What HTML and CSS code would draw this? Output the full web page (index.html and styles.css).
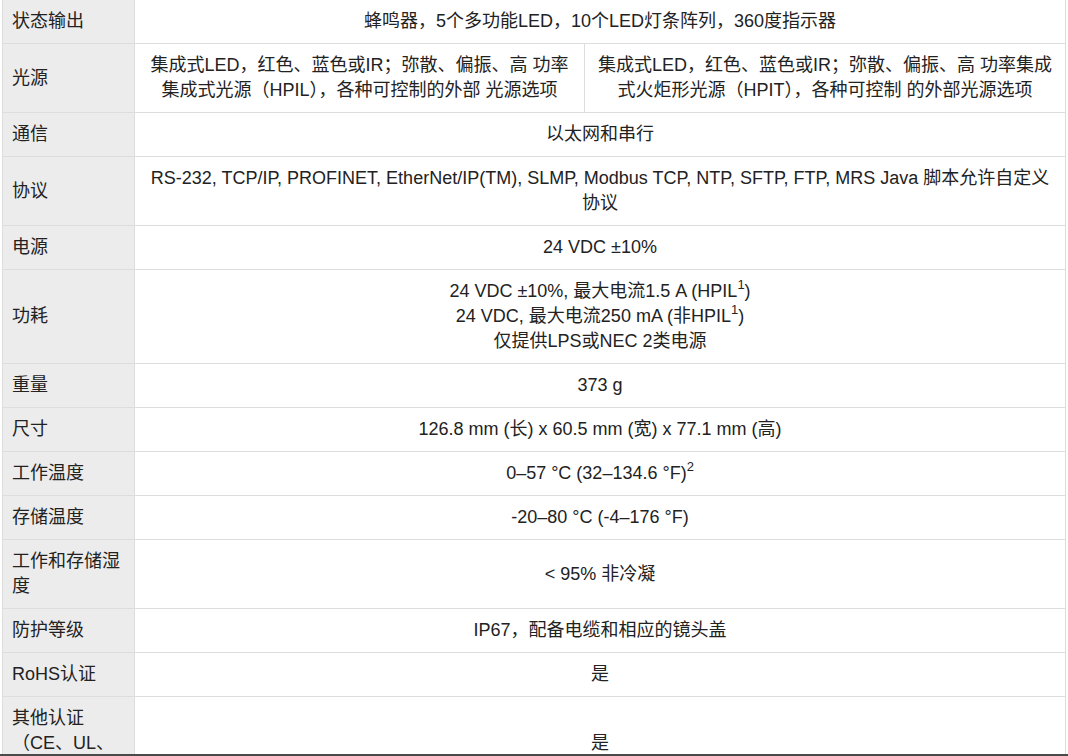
FILE: index.html
```html
<!DOCTYPE html>
<html lang="zh-CN">
<head>
<meta charset="utf-8">
<title>规格</title>
<link rel="stylesheet" href="styles.css">
</head>
<body>
<table class="spec">
  <colgroup>
    <col class="c-label">
    <col class="c-a">
    <col class="c-b">
  </colgroup>
  <tbody>
    <tr><th>状态输出</th><td colspan="2">蜂鸣器，5个多功能LED，10个LED灯条阵列，360度指示器</td></tr>
    <tr><th>光源</th><td>集成式LED，红色、蓝色或IR；弥散、偏振、高 功率<br>集成式光源（HPIL），各种可控制的外部 光源选项</td><td>集成式LED，红色、蓝色或IR；弥散、偏振、高 功率集成<br>式火炬形光源（HPIT），各种可控制 的外部光源选项</td></tr>
    <tr><th>通信</th><td colspan="2">以太网和串行</td></tr>
    <tr><th>协议</th><td colspan="2">RS-232, TCP/IP, PROFINET, EtherNet/IP(TM), SLMP, Modbus TCP, NTP, SFTP, FTP, MRS Java 脚本允许自定义<br>协议</td></tr>
    <tr><th>电源</th><td colspan="2">24 VDC ±10%</td></tr>
    <tr><th>功耗</th><td colspan="2">24 VDC ±10%, 最大电流1.5 A (HPIL<sup>1</sup>)<br>24 VDC, 最大电流250 mA (非HPIL<sup>1</sup>)<br>仅提供LPS或NEC 2类电源</td></tr>
    <tr><th>重量</th><td colspan="2">373 g</td></tr>
    <tr><th>尺寸</th><td colspan="2">126.8 mm (长) x 60.5 mm (宽) x 77.1 mm (高)</td></tr>
    <tr><th>工作温度</th><td colspan="2">0–57 °C (32–134.6 °F)<sup>2</sup></td></tr>
    <tr><th>存储温度</th><td colspan="2">-20–80 °C (-4–176 °F)</td></tr>
    <tr><th>工作和存储湿度</th><td colspan="2">&lt; 95% 非冷凝</td></tr>
    <tr><th>防护等级</th><td colspan="2">IP67，配备电缆和相应的镜头盖</td></tr>
    <tr><th>RoHS认证</th><td colspan="2">是</td></tr>
    <tr><th>其他认证（CE、UL、FCC、KC）</th><td colspan="2">是</td></tr>
  </tbody>
</table>
<div class="edge"></div>
</body>
</html>
```
FILE: styles.css
```css
html, body {
  margin: 0;
  padding: 0;
  background: #ffffff;
}
body {
  font-family: "Liberation Sans", Arial, "Noto Sans CJK SC", sans-serif;
  font-size: 18px;
  color: #222222;
}
.spec {
  border-collapse: collapse;
  table-layout: fixed;
  width: 1063px;
  margin: -1px 0 0 2px;
}
.c-label { width: 132px; }
.c-a { width: 450px; }
.c-b { width: 481px; }
.spec th,
.spec td {
  border: 1px solid #dddddd;
  padding: 9px 9px;
  line-height: 25px;
  vertical-align: middle;
  font-weight: normal;
}
.spec th {
  background: #ececec;
  text-align: left;
}
.spec td {
  text-align: center;
  background: #ffffff;
}
.spec sup {
  font-size: 13px;
  line-height: 0;
  vertical-align: 8px;
}
.edge {
  position: fixed;
  left: 0;
  right: 0;
  bottom: 0;
  height: 2px;
  background: #4a4a4a;
}
```
